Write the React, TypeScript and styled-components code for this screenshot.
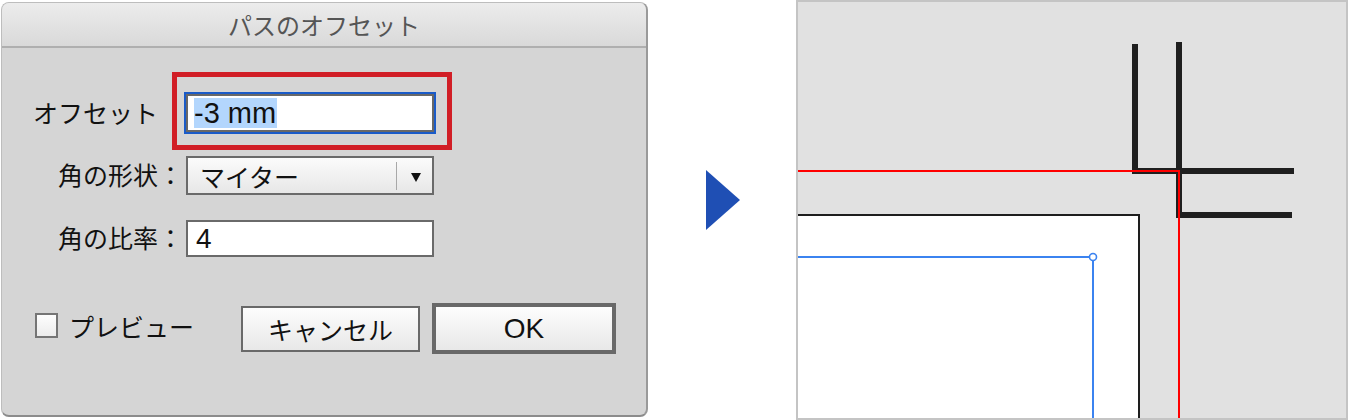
import React from 'react';
import styled, {createGlobalStyle} from 'styled-components';

const GlobalStyle = createGlobalStyle`
  html, body {
    margin: 0;
    padding: 0;
    background: #ffffff;
  }

  body {
    font-family: "Liberation Sans", "Noto Sans CJK JP", sans-serif;
    color: #111111;
  }
`;

const App = () => {
    return (
        <>
            <GlobalStyle/>
            <Page>
                <Dialog>
                    <TitleBar>パスのオフセット</TitleBar>
                    <Body>
                        <Row $top={24}>
                            <Label $width={156} $nudge={6}>オフセット</Label>
                            <Highlight>
                                <FocusedInput>
                                    <Selected>-3 mm</Selected>
                                </FocusedInput>
                            </Highlight>
                        </Row>
                        <Row $top={6}>
                            <Label $width={181}>角の形状：</Label>
                            <Select>
                                <SelectText>マイター</SelectText>
                                <SelectDivider/>
                                <SelectArrow/>
                            </Select>
                        </Row>
                        <Row $top={25}>
                            <Label $width={181}>角の比率：</Label>
                            <Field>4</Field>
                        </Row>
                        <Footer>
                            <Checkbox/>
                            <CheckLabel>プレビュー</CheckLabel>
                            <Button>キャンセル</Button>
                            <Button $primary>OK</Button>
                        </Footer>
                    </Body>
                </Dialog>
                <ArrowCell>
                    <Triangle/>
                </ArrowCell>
                <Panel>
                    <svg width='100%' height='100%' viewBox='0 0 548 416' preserveAspectRatio='xMinYMin slice'>
                        <rect x='0' y='212' width='342' height='210' fill='#ffffff'/>
                        <path d='M0 213 H341 V420' fill='none' stroke='#1e1e1e' strokeWidth='2'/>
                        <path d='M0 255 H295 V420' fill='none' stroke='#3b83f0' strokeWidth='2'/>
                        <circle cx='295' cy='255' r='3.5' fill='#ffffff' stroke='#3b83f0' strokeWidth='1.6'/>
                        <path d='M337 42 V169 H496' fill='none' stroke='#1f1f1f' strokeWidth='6'
                              strokeLinejoin='miter'/>
                        <path d='M381 40 V213 H494' fill='none' stroke='#1f1f1f' strokeWidth='6'
                              strokeLinejoin='miter'/>
                        <path d='M0 169 H381 V420' fill='none' stroke='#ff0000' strokeWidth='2'/>
                    </svg>
                </Panel>
            </Page>
        </>
    );
};

const Page = styled.div`
  width: 1348px;
  height: 420px;
  display: flex;
  align-items: flex-start;
  overflow: hidden;
`;

const Dialog = styled.div`
  width: 647px;
  height: 415px;
  margin: 2px 0 0 1px;
  box-sizing: border-box;
  display: flex;
  flex-direction: column;
  border: 1px solid #bdbdbd;
  border-right: 2px solid #9a9a9a;
  border-bottom: 2px solid #8c8c8c;
  border-radius: 8px;
  background: #d5d5d5;
  overflow: hidden;
`;

const TitleBar = styled.div`
  height: 43px;
  flex-shrink: 0;
  display: flex;
  align-items: center;
  justify-content: center;
  background: linear-gradient(#ececec, #d9d9d9);
  border-bottom: 2px solid #afafaf;
  font-size: 24px;
  color: #555555;
`;

const Body = styled.div`
  flex: 1;
  display: flex;
  flex-direction: column;
`;

const Row = styled.div<{ $top: number }>`
  display: flex;
  align-items: center;
  margin-top: ${(props) => props.$top}px;
`;

const Label = styled.div<{ $width: number; $nudge?: number }>`
  width: ${(props) => props.$width}px;
  text-align: right;
  font-size: 25px;
  line-height: 30px;
  white-space: nowrap;
  padding-top: ${(props) => props.$nudge || 0}px;
  box-sizing: border-box;
`;

const Highlight = styled.div`
  margin-left: 14px;
  padding: 15px 11px 11px 7px;
  border: 5px solid #d11e26;
`;

const FocusedInput = styled.div`
  width: 252px;
  height: 42px;
  box-sizing: border-box;
  display: flex;
  align-items: center;
  padding-left: 8px;
  border: 2px solid #1a5bc8;
  box-shadow: inset 0 0 0 2px #686868;
  background: #ffffff;
  font-size: 29px;
`;

const Selected = styled.span`
  background: #b3d6fd;
  line-height: 30px;
  padding-right: 1px;
`;

const Select = styled.div`
  margin-left: 3px;
  width: 248px;
  height: 39px;
  box-sizing: border-box;
  display: flex;
  align-items: center;
  border: 2px solid #6a6a6a;
  background: linear-gradient(#fbfbfb, #e7e7e7);
`;

const SelectText = styled.div`
  flex: 1;
  padding-left: 12px;
  font-size: 25px;
`;

const SelectDivider = styled.div`
  width: 1px;
  height: 28px;
  background: #a8a8a8;
`;

const SelectArrow = styled.div`
  margin: 3px 11px 0 14px;
  width: 0;
  height: 0;
  border-left: 5px solid transparent;
  border-right: 5px solid transparent;
  border-top: 9px solid #111111;
`;

const Field = styled.div`
  margin-left: 3px;
  width: 248px;
  height: 37px;
  box-sizing: border-box;
  display: flex;
  align-items: center;
  padding-left: 8px;
  border: 2px solid #6a6a6a;
  background: #ffffff;
  font-size: 28px;
`;

const Footer = styled.div`
  display: flex;
  align-items: center;
  margin-top: 46px;
  padding-left: 33px;
`;

const Checkbox = styled.div`
  width: 23px;
  height: 25px;
  box-sizing: border-box;
  border: 2px solid #757575;
  background: linear-gradient(#fdfdfd, #ececec);
  margin-top: -6px;
`;

const CheckLabel = styled.div`
  margin-left: 11px;
  font-size: 25px;
  margin-top: -6px;
`;

const Button = styled.div<{ $primary?: boolean }>`
  height: ${(props) => props.$primary ? 51 : 46}px;
  width: ${(props) => props.$primary ? 184 : 179}px;
  margin-left: ${(props) => props.$primary ? 12 : 47}px;
  box-sizing: border-box;
  display: flex;
  align-items: center;
  justify-content: center;
  border: ${(props) => props.$primary ? '4px' : '2px'} solid #696969;
  background: linear-gradient(#fdfdfd, #e8e8e8);
  font-size: ${(props) => props.$primary ? 28 : 25}px;
`;

const ArrowCell = styled.div`
  width: 148px;
  flex-shrink: 0;
  padding: 170px 0 0 58px;
  box-sizing: border-box;
`;

const Triangle = styled.div`
  width: 0;
  height: 0;
  border-top: 30px solid transparent;
  border-bottom: 30px solid transparent;
  border-left: 34px solid #1f4fb4;
`;

const Panel = styled.div`
  flex: 1;
  height: 420px;
  box-sizing: border-box;
  border: 2px solid #c4c4c4;
  background: #e1e1e1;
  overflow: hidden;

  svg {
    display: block;
  }
`;

export default App;
